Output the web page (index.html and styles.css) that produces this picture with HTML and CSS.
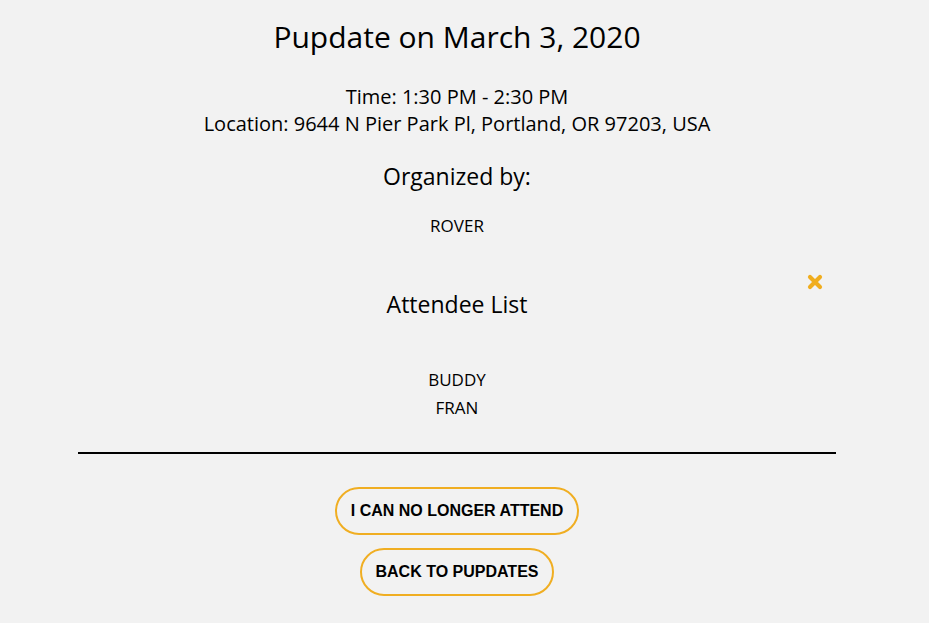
FILE: index.html
```html
<!DOCTYPE html>
<html>
<head>
<meta charset="utf-8">
<link rel="stylesheet" href="styles.css">
</head>
<body>
<main class="page">
  <h1 class="title">Pupdate on March 3, 2020</h1>
  <div class="details">
    <p>Time: 1:30 PM - 2:30 PM</p>
    <p>Location: 9644 N Pier Park Pl, Portland, OR 97203, USA</p>
  </div>
  <h2 class="subhead">Organized by:</h2>
  <p class="name organizer">ROVER</p>
  <div class="attendee-head">
    <h2 class="subhead">Attendee List</h2>
    <span class="close" aria-label="close">
      <svg width="16" height="16" viewBox="0 0 16 16"><path d="M3 3 L13 13 M13 3 L3 13" stroke="#f0ad1e" stroke-width="4.2" stroke-linecap="round"/></svg>
    </span>
  </div>
  <ul class="attendees">
    <li class="name">BUDDY</li>
    <li class="name">FRAN</li>
  </ul>
  <hr class="rule">
  <div class="actions">
    <button class="btn">I CAN NO LONGER ATTEND</button>
    <button class="btn">BACK TO PUPDATES</button>
  </div>
</main>
</body>
</html>
```
FILE: styles.css
```css
html, body {
  margin: 0;
  background: #f2f2f2;
}
body {
  font-family: "Open Sans", sans-serif;
  color: #000;
}
.page {
  width: 914px;
  text-align: center;
}
.title {
  font-size: 30px;
  font-weight: 400;
  margin: 0;
  padding-top: 17px;
  line-height: 40px;
}
.details {
  margin-top: 26px;
  font-size: 20px;
  line-height: 27px;
}
.details p {
  margin: 0;
}
.subhead {
  font-size: 23px;
  font-weight: 400;
  margin: 0;
  line-height: 32px;
}
.details + .subhead {
  margin-top: 23px;
}
.name {
  font-size: 17px;
  line-height: 28px;
  margin: 0;
}
.organizer {
  margin-top: 20px;
}
.attendee-head {
  position: relative;
  margin-top: 48px;
}
.close {
  position: absolute;
  left: 807px;
  top: -15px;
  width: 16px;
  height: 16px;
}
.attendees {
  list-style: none;
  padding: 0;
  margin: 46px 0 0;
}
.rule {
  margin: 30px 78px 0;
  border: 0;
  border-top: 2px solid #000;
  height: 0;
}
.actions {
  display: flex;
  flex-direction: column;
  align-items: center;
  gap: 13px;
  margin-top: 33px;
}
.btn {
  font-family: "Liberation Sans", Arial, sans-serif;
  font-weight: 700;
  font-size: 16px;
  color: #000;
  background: #f2f2f2;
  border: 2px solid #f0ae22;
  border-radius: 24px;
  height: 48px;
  padding: 0 14px;
}
```
